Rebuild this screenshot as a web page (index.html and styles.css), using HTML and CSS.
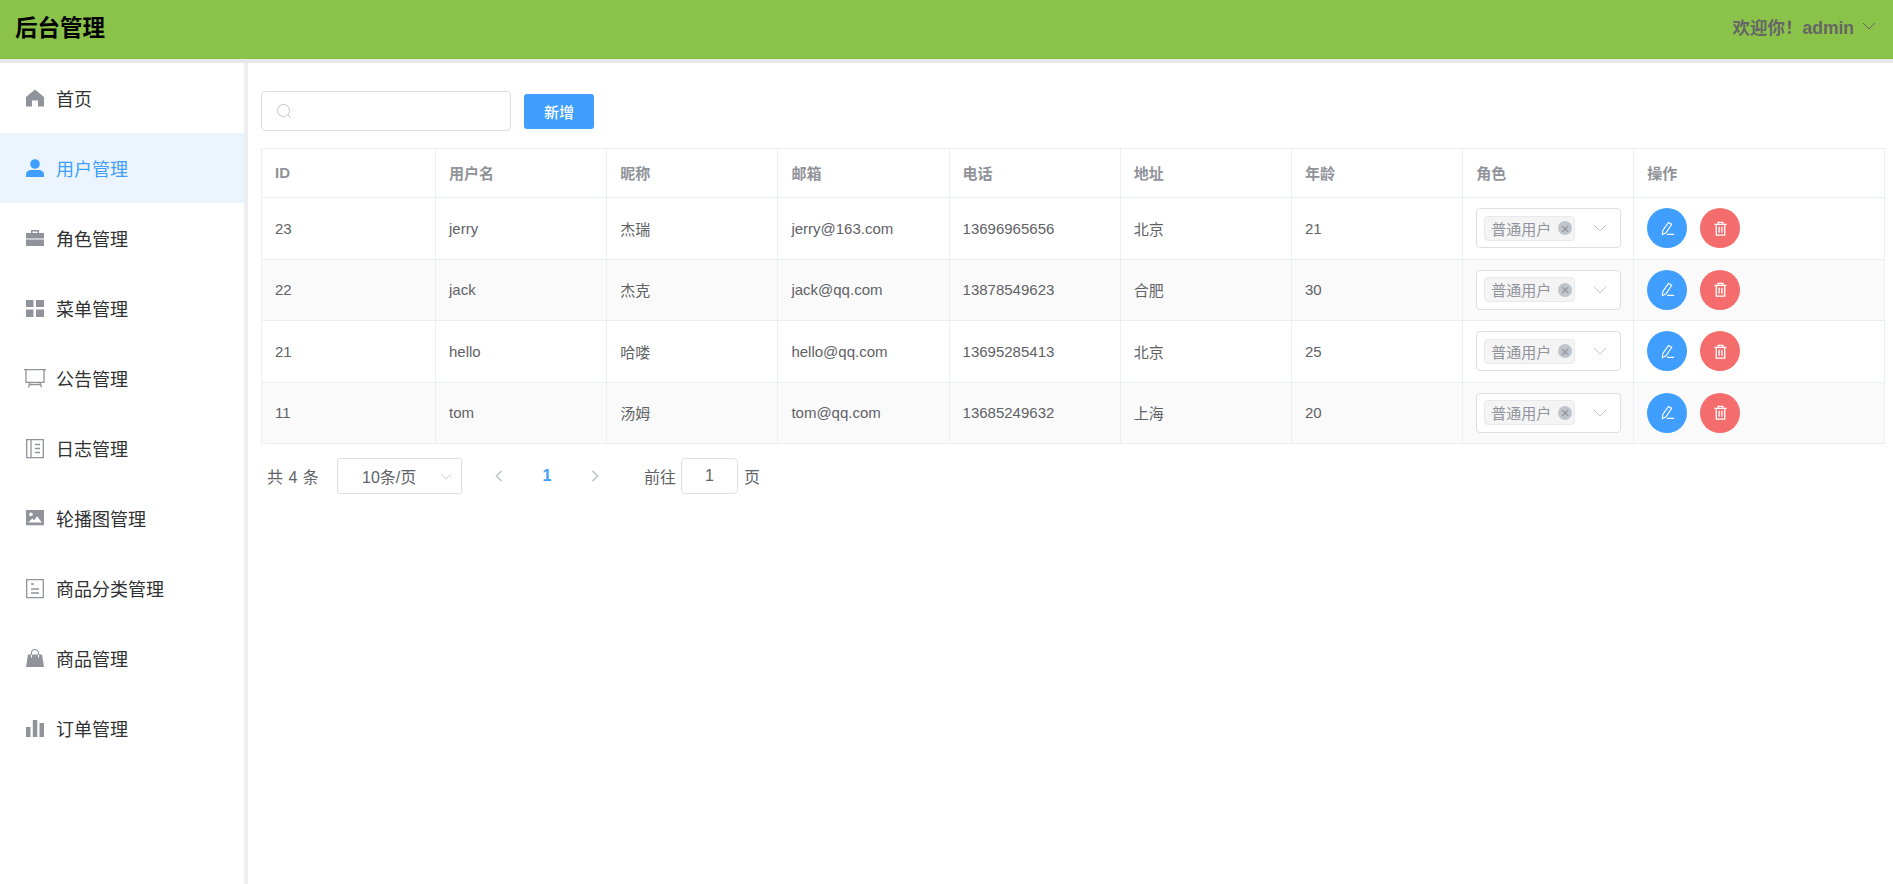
FILE: index.html
```html
<!DOCTYPE html>
<html lang="zh-CN">
<head>
    <meta charset="UTF-8">
    <title>后台管理</title>
    <link rel="stylesheet" href="styles.css">
</head>
<body>
    <header class="topbar">
        <div class="brand">后台管理</div>
        <div class="user">
            <span>欢迎你！admin</span>
            <svg class="user-arrow" viewBox="0 0 14 8"><path d="M1 1l6 6 6-6" fill="none" stroke="currentColor" stroke-width="1"/></svg>
        </div>
    </header>
    <div class="layout">
        <nav class="aside">
            <a class="menu-item"><svg class="menu-icon" viewBox="0 0 18 18"><path d="M9 .5L18 8v9.500h-6V11.500H6v6H0V8z" fill="currentColor"/></svg>首页</a>
            <a class="menu-item active"><svg class="menu-icon" viewBox="0 0 18 18"><circle cx="9" cy="5" r="4.800" fill="currentColor"/><path d="M0 15.500C0 12.500 2.500 11 5 11h8c2.500 0 5 1.500 5 4.500V18H0z" fill="currentColor"/></svg>用户管理</a>
            <a class="menu-item"><svg class="menu-icon" viewBox="0 0 18 18"><path d="M0 4h5V1h8v3h5v5.500H0zM6.500 2.500V4h5V2.500zM0 10.500h18V17H0z" fill="currentColor" fill-rule="evenodd"/></svg>角色管理</a>
            <a class="menu-item"><svg class="menu-icon" viewBox="0 0 18 18"><path d="M0 1h7.500v7H0zM10 1h8v7h-8zM0 10.500h7.500V18H0zM10 10.500h8V18h-8z" fill="currentColor"/></svg>菜单管理</a>
            <a class="menu-item"><svg class="menu-icon" viewBox="0 0 18 18"><path d="M-2 .7h22M0 .7v12.600h18V.7M4 13.300L2.500 18.500M14 13.300l1.500 5M3.500 15.500h11" fill="none" stroke="currentColor" stroke-width="1.300"/></svg>公告管理</a>
            <a class="menu-item"><svg class="menu-icon" viewBox="0 0 18 18"><path d="M.7.700h16.600v18H.7zM5 .7v18M9 5.500h5M9 9.500h5M9 13.500h5" fill="none" stroke="currentColor" stroke-width="1.300"/></svg>日志管理</a>
            <a class="menu-item"><svg class="menu-icon" viewBox="0 0 20 18"><path d="M0 0h20v17H0zM5.500 3a2 2 0 100 4 2 2 0 000-4zM2.500 14h15l-5-7-3.500 4.500L7 9.500z" fill="currentColor" fill-rule="evenodd"/></svg>轮播图管理</a>
            <a class="menu-item"><svg class="menu-icon" viewBox="0 0 18 18"><path d="M.7.700h16.600v18H.7zM5 5h3M5 10h8M5 14h8" fill="none" stroke="currentColor" stroke-width="1.300"/></svg>商品分类管理</a>
            <a class="menu-item"><svg class="menu-icon" viewBox="0 0 18 18"><path d="M2 5.500h14l2 12.500H0z" fill="currentColor"/><path d="M5.500 8V4a3.500 3.500 0 017 0v4" fill="none" stroke="currentColor" stroke-width="1.100"/><path d="M5.500 6v2.500M12.500 6v2.500" stroke="#fff" stroke-width="1.100"/></svg>商品管理</a>
            <a class="menu-item"><svg class="menu-icon" viewBox="0 0 18 18"><path d="M0 8h4.500v10H0zM6.800 1h4.500v17H6.800zM13.500 4H18v14h-4.500z" fill="currentColor"/></svg>订单管理</a>
        </nav>
        <main class="content">
            <div class="toolbar">
                <div class="search">
                    <svg class="search-icon" viewBox="0 0 16 16"><circle cx="7.500" cy="7.500" r="6" fill="none" stroke="currentColor"/><path d="M12 12l2.500 2.500" stroke="currentColor"/></svg>
                </div>
                <button class="btn-add">新增</button>
            </div>
            <table class="user-table">
                <thead>
                    <tr><th>ID</th><th>用户名</th><th>昵称</th><th>邮箱</th><th>电话</th><th>地址</th><th>年龄</th><th>角色</th><th>操作</th></tr>
                </thead>
                <tbody>
                    <tr>
                        <td>23</td><td>jerry</td><td>杰瑞</td><td>jerry@163.com</td><td>13696965656</td><td>北京</td><td>21</td>
                        <td><div class="role-select"><span class="tag">普通用户<i class="tag-close">×</i></span><svg class="select-arrow" viewBox="0 0 14 8"><path d="M1 1l6 6 6-6" fill="none" stroke="currentColor"/></svg></div></td>
                        <td class="actions"><button class="circle blue"><svg viewBox="0 0 16 16"><path d="M9 1.500l3.500 2-6 9-4 2 .5-4.500zM7.500 14.300H15" fill="none" stroke="#fff" stroke-width="1.200"/></svg></button><button class="circle red"><svg viewBox="0 0 16 16"><path d="M1.500 3.500h13M5.500 3.500V1.500h5v2M3.500 3.500v11.500h9V3.500M6.500 6v6.500M9.500 6v6.500" fill="none" stroke="#fff" stroke-width="1.400"/></svg></button></td>
                    </tr>
                    <tr class="striped">
                        <td>22</td><td>jack</td><td>杰克</td><td>jack@qq.com</td><td>13878549623</td><td>合肥</td><td>30</td>
                        <td><div class="role-select"><span class="tag">普通用户<i class="tag-close">×</i></span><svg class="select-arrow" viewBox="0 0 14 8"><path d="M1 1l6 6 6-6" fill="none" stroke="currentColor"/></svg></div></td>
                        <td class="actions"><button class="circle blue"><svg viewBox="0 0 16 16"><path d="M9 1.500l3.500 2-6 9-4 2 .5-4.500zM7.500 14.300H15" fill="none" stroke="#fff" stroke-width="1.200"/></svg></button><button class="circle red"><svg viewBox="0 0 16 16"><path d="M1.500 3.500h13M5.500 3.500V1.500h5v2M3.500 3.500v11.500h9V3.500M6.500 6v6.500M9.500 6v6.500" fill="none" stroke="#fff" stroke-width="1.400"/></svg></button></td>
                    </tr>
                    <tr>
                        <td>21</td><td>hello</td><td>哈喽</td><td>hello@qq.com</td><td>13695285413</td><td>北京</td><td>25</td>
                        <td><div class="role-select"><span class="tag">普通用户<i class="tag-close">×</i></span><svg class="select-arrow" viewBox="0 0 14 8"><path d="M1 1l6 6 6-6" fill="none" stroke="currentColor"/></svg></div></td>
                        <td class="actions"><button class="circle blue"><svg viewBox="0 0 16 16"><path d="M9 1.500l3.500 2-6 9-4 2 .5-4.500zM7.500 14.300H15" fill="none" stroke="#fff" stroke-width="1.200"/></svg></button><button class="circle red"><svg viewBox="0 0 16 16"><path d="M1.500 3.500h13M5.500 3.500V1.500h5v2M3.500 3.500v11.500h9V3.500M6.500 6v6.500M9.500 6v6.500" fill="none" stroke="#fff" stroke-width="1.400"/></svg></button></td>
                    </tr>
                    <tr class="striped">
                        <td>11</td><td>tom</td><td>汤姆</td><td>tom@qq.com</td><td>13685249632</td><td>上海</td><td>20</td>
                        <td><div class="role-select"><span class="tag">普通用户<i class="tag-close">×</i></span><svg class="select-arrow" viewBox="0 0 14 8"><path d="M1 1l6 6 6-6" fill="none" stroke="currentColor"/></svg></div></td>
                        <td class="actions"><button class="circle blue"><svg viewBox="0 0 16 16"><path d="M9 1.500l3.500 2-6 9-4 2 .5-4.500zM7.500 14.300H15" fill="none" stroke="#fff" stroke-width="1.200"/></svg></button><button class="circle red"><svg viewBox="0 0 16 16"><path d="M1.500 3.500h13M5.500 3.500V1.500h5v2M3.500 3.500v11.500h9V3.500M6.500 6v6.500M9.500 6v6.500" fill="none" stroke="#fff" stroke-width="1.400"/></svg></button></td>
                    </tr>
                </tbody>
            </table>
            <div class="pagination">
                <span class="total">共 4 条</span>
                <div class="page-size">10条/页<svg class="size-arrow" viewBox="0 0 14 8"><path d="M1 1l6 6 6-6" fill="none" stroke="currentColor"/></svg></div>
                <svg class="page-arrow prev" viewBox="0 0 8 14"><path d="M7 1L1 7l6 6" fill="none" stroke="currentColor" stroke-width="1.800"/></svg>
                <span class="page-current">1</span>
                <svg class="page-arrow next" viewBox="0 0 8 14"><path d="M1 1l6 6-6 6" fill="none" stroke="currentColor" stroke-width="1.800"/></svg>
                <span class="jump">前往</span>
                <div class="page-input">1</div>
                <span>页</span>
            </div>
        </main>
    </div>
</body>
</html>
```

FILE: styles.css
```css
* {
    box-sizing: border-box;
}
html, body {
    height: 100%;
}
body {
    margin: 0;
    overflow: hidden;
    font-family: "Liberation Sans", "Noto Sans CJK SC", sans-serif;
    font-size: 15px;
    color: #606266;
    background-color: #fff;
}
.topbar {
    height: 63px;
    background-color: #8bc34a;
    border-bottom: 4px solid #e8e8e8;
    display: flex;
    align-items: center;
    justify-content: space-between;
    padding: 0 17px 7px 15px;
}
.brand {
    font-size: 22.5px;
    font-weight: 700;
    color: #000;
}
.user {
    display: flex;
    align-items: center;
    gap: 8px;
    font-size: 17.5px;
    font-weight: 700;
    color: #666;
}
.user-arrow {
    width: 14px;
    height: 8px;
}
.layout {
    display: flex;
    height: calc(100% - 63px);
}
.aside {
    width: 248px;
    flex-shrink: 0;
    border-right: 4px solid #eee;
}
.menu-item {
    height: 70px;
    display: flex;
    align-items: center;
    padding-left: 26px;
    font-size: 18px;
    color: #303133;
}
.menu-icon {
    width: 18px;
    height: 18px;
    margin-right: 12px;
    color: #909399;
    overflow: visible;
    flex-shrink: 0;
}
.menu-item.active {
    background-color: #ecf5ff;
    color: #409eff;
}
.menu-item.active .menu-icon {
    color: #409eff;
}
.content {
    flex: 1;
    min-width: 0;
    padding: 28px 8px 0 13px;
}
.toolbar {
    display: flex;
    align-items: center;
    gap: 13px;
    height: 40px;
    margin-bottom: 17px;
}
.search {
    width: 250px;
    height: 40px;
    border: 1px solid #dcdfe6;
    border-radius: 4px;
    display: flex;
    align-items: center;
    padding-left: 14px;
}
.search-icon {
    width: 16px;
    height: 16px;
    color: #c0c4cc;
}
.btn-add {
    width: 70px;
    height: 35px;
    border: none;
    border-radius: 3px;
    background-color: #409eff;
    color: #fff;
    font-family: inherit;
    font-size: 15px;
    font-weight: 500;
}
.user-table {
    width: 100%;
    table-layout: fixed;
    border-collapse: collapse;
    border: 1px solid #ebeef5;
}
.user-table th,
.user-table td {
    border: 1px solid #ebeef5;
    padding: 0 13px;
    text-align: left;
}
.user-table th {
    width: 171.2px;
    height: 49px;
    padding-bottom: 2px;
    color: #909399;
    font-weight: 700;
}
.user-table th:first-child {
    width: 174px;
}
.user-table th:last-child {
    width: auto;
}
.user-table td {
    height: 61.5px;
}
.striped td {
    background-color: #fafafa;
}
.role-select {
    width: 145px;
    height: 40px;
    background-color: #fff;
    border: 1px solid #dcdfe6;
    border-radius: 4px;
    display: flex;
    align-items: center;
    justify-content: space-between;
    padding: 0 13px 0 7px;
}
.tag {
    height: 25px;
    display: inline-flex;
    align-items: center;
    gap: 7px;
    padding: 0 2px 0 6px;
    background-color: #f4f4f5;
    border: 1px solid #e9e9eb;
    border-radius: 4px;
    color: #909399;
    font-size: 15px;
}
.tag-close {
    width: 14px;
    height: 14px;
    border-radius: 50%;
    background-color: #c0c4cc;
    color: #909399;
    display: flex;
    align-items: center;
    justify-content: center;
    font-style: normal;
    font-size: 15px;
    line-height: 1;
}
.select-arrow {
    width: 14px;
    height: 8px;
    color: #c0c4cc;
}
.actions {
    white-space: nowrap;
}
.circle {
    width: 40px;
    height: 40px;
    border: none;
    border-radius: 50%;
    padding: 0;
    margin-right: 13px;
    display: inline-flex;
    align-items: center;
    justify-content: center;
    vertical-align: middle;
}
.circle svg {
    width: 15px;
    height: 15px;
}
.blue {
    background-color: #409eff;
}
.red {
    background-color: #f56c6c;
}
.pagination {
    display: flex;
    align-items: center;
    height: 36px;
    margin-top: 14px;
    padding-left: 6px;
    font-size: 16px;
    color: #606266;
}
.total {
    width: 70px;
    word-spacing: 1px;
}
.page-size {
    width: 125px;
    height: 36px;
    border: 1px solid #dcdfe6;
    border-radius: 3px;
    display: flex;
    align-items: center;
    padding-left: 24px;
    position: relative;
}
.size-arrow {
    position: absolute;
    right: 9px;
    top: 14px;
    width: 12px;
    height: 7px;
    color: #c0c4cc;
}
.page-arrow {
    width: 8px;
    height: 12px;
    color: #c0c4cc;
}
.prev {
    margin-left: 33px;
}
.page-current {
    width: 88px;
    text-align: center;
    color: #409eff;
    font-weight: 700;
}
.jump {
    margin-left: 45px;
    margin-right: 5px;
}
.page-input {
    width: 57px;
    height: 36px;
    border: 1px solid #dcdfe6;
    border-radius: 4px;
    display: flex;
    align-items: center;
    justify-content: center;
    margin-right: 6px;
}
```
